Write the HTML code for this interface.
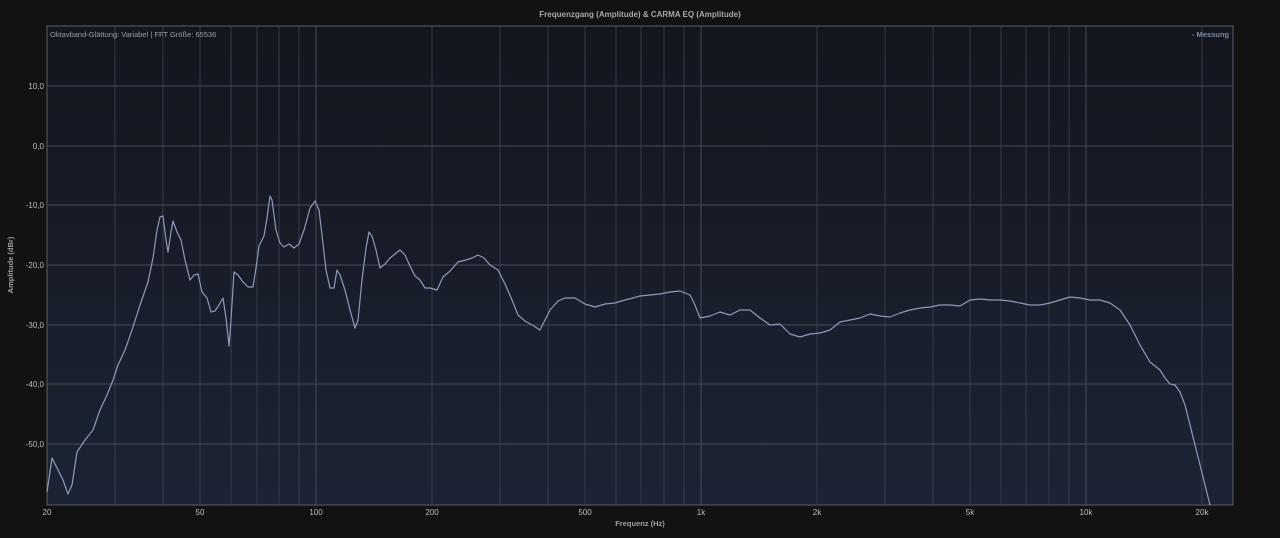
<!DOCTYPE html><html><head><style>html,body{margin:0;padding:0;background:#121212;}svg{display:block}</style></head><body>
<svg width="1280" height="538" xmlns="http://www.w3.org/2000/svg" font-family="Liberation Sans, sans-serif">
<defs><linearGradient id="g" x1="0" y1="0" x2="0" y2="1"><stop offset="0" stop-color="#13161d"/><stop offset="1" stop-color="#1c2334"/></linearGradient></defs>
<rect width="1280" height="538" fill="#121212"/>
<rect x="47" y="26" width="1186" height="479" fill="url(#g)" stroke="#5a5e66" stroke-width="1"/>
<g stroke="#363c48" stroke-width="1">
<line x1="115" y1="26" x2="115" y2="505"/><line x1="163" y1="26" x2="163" y2="505"/><line x1="200" y1="26" x2="200" y2="505"/><line x1="231" y1="26" x2="231" y2="505"/><line x1="257" y1="26" x2="257" y2="505"/><line x1="279" y1="26" x2="279" y2="505"/><line x1="299" y1="26" x2="299" y2="505"/>
<line x1="432" y1="26" x2="432" y2="505"/><line x1="500" y1="26" x2="500" y2="505"/><line x1="548" y1="26" x2="548" y2="505"/><line x1="585" y1="26" x2="585" y2="505"/><line x1="616" y1="26" x2="616" y2="505"/><line x1="641" y1="26" x2="641" y2="505"/><line x1="664" y1="26" x2="664" y2="505"/><line x1="684" y1="26" x2="684" y2="505"/>
<line x1="817" y1="26" x2="817" y2="505"/><line x1="885" y1="26" x2="885" y2="505"/><line x1="933" y1="26" x2="933" y2="505"/><line x1="970" y1="26" x2="970" y2="505"/><line x1="1001" y1="26" x2="1001" y2="505"/><line x1="1026" y1="26" x2="1026" y2="505"/><line x1="1049" y1="26" x2="1049" y2="505"/><line x1="1069" y1="26" x2="1069" y2="505"/>
<line x1="1202" y1="26" x2="1202" y2="505"/>
</g>
<g stroke="#454b57" stroke-width="1">
<line x1="316" y1="26" x2="316" y2="505"/><line x1="701" y1="26" x2="701" y2="505"/><line x1="1086" y1="26" x2="1086" y2="505"/>
<line x1="47" y1="86" x2="1233" y2="86"/><line x1="47" y1="146" x2="1233" y2="146"/><line x1="47" y1="205" x2="1233" y2="205"/><line x1="47" y1="265" x2="1233" y2="265"/><line x1="47" y1="325" x2="1233" y2="325"/><line x1="47" y1="384" x2="1233" y2="384"/><line x1="47" y1="444" x2="1233" y2="444"/>
</g>
<polyline fill="none" stroke="#8c9abd" stroke-width="1.2" stroke-linejoin="round" points="47,492 52,458 58,470 63,480 68,494 72,485 77,452 85,440 93,430 100,410 107,395 113,380 118,365 125,350 132,330 140,305 148,282 153,258 157,230 160,217 163,216 166,240 168,252 171,232 173,221 177,232 181,240 185,260 190,280 194,275 198,274 202,292 207,298 211,312 215,311 219,305 223,298 226,318 229,346 231,320 234,272 238,275 243,282 248,287 253,287 256,268 259,246 264,236 267,218 270,196 272,200 276,230 280,243 284,247 289,244 294,248 299,244 304,230 310,208 315,201 319,210 322,235 326,270 330,288 334,288 337,270 340,275 345,290 350,310 355,328 358,320 362,280 366,248 369,232 372,236 376,250 380,268 385,264 390,258 395,254 400,250 405,255 410,266 415,276 420,280 425,288 430,288 437,290 443,277 450,271 458,262 466,260 472,258 478,255 484,258 490,265 498,270 505,284 512,300 518,315 525,321 532,325 540,330 545,320 550,310 558,301 565,298 575,298 585,304 595,307 605,304 615,303 625,300 633,298 640,296 650,295 660,294 670,292 680,291 690,295 695,305 700,318 710,316 720,312 730,315 740,310 750,310 760,318 770,325 780,324 790,334 800,337 810,334 820,333 830,330 840,322 850,320 860,318 870,314 880,316 890,317 900,313 910,310 920,308 930,307 940,305 950,305 960,306 970,300 980,299 990,300 1000,300 1010,301 1020,303 1030,305 1040,305 1050,303 1060,300 1070,297 1080,298 1090,300 1100,300 1110,303 1120,310 1130,325 1140,345 1150,362 1160,370 1165,378 1170,384 1175,385 1180,392 1185,405 1190,425 1195,445 1200,465 1205,485 1210,505"/>
<text x="640" y="17" font-size="8" font-weight="bold" fill="#a8a8a8" text-anchor="middle">Frequenzgang (Amplitude) &amp; CARMA EQ (Amplitude)</text>
<text x="50" y="37" font-size="7.5" fill="#9a9ea6">Oktavband-Glättung: Variabel | FFT Größe: 65536</text>
<text x="1229" y="37" font-size="7.5" font-weight="bold" fill="#8088a8" text-anchor="end">- Messung</text>
<g font-size="8" fill="#bdbdbd" text-anchor="end">
<text x="44" y="89">10,0</text><text x="44" y="149">0,0</text><text x="44" y="208">-10,0</text><text x="44" y="268">-20,0</text><text x="44" y="328">-30,0</text><text x="44" y="387">-40,0</text><text x="44" y="447">-50,0</text>
</g>
<g font-size="8" fill="#bdbdbd" text-anchor="middle">
<text x="47" y="515">20</text><text x="200" y="515">50</text><text x="316" y="515">100</text><text x="432" y="515">200</text><text x="585" y="515">500</text><text x="701" y="515">1k</text><text x="817" y="515">2k</text><text x="970" y="515">5k</text><text x="1086" y="515">10k</text><text x="1202" y="515">20k</text>
</g>
<text x="640" y="526" font-size="7.5" font-weight="bold" fill="#a0a0a0" text-anchor="middle">Frequenz (Hz)</text>
<text transform="translate(13,265) rotate(-90)" font-size="7.5" font-weight="bold" fill="#a0a0a0" text-anchor="middle">Amplitude (dBr)</text>
</svg>
</body></html>
